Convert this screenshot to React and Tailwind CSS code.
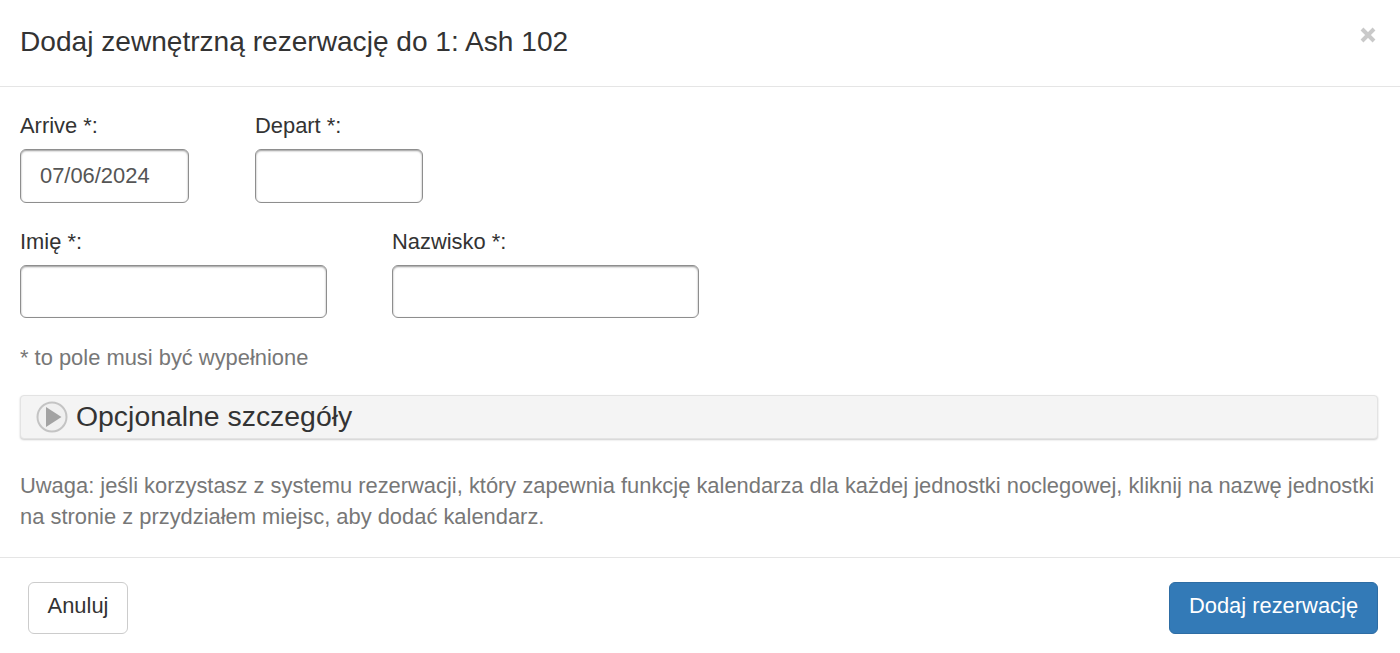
import React from 'react';

const fieldClass =
  'block rounded-[6px] border border-[#8e8e8e] bg-white px-[19px] text-[21.9px] text-[#555] shadow-[inset_0_1px_2px_rgba(0,0,0,0.4)] outline-none';

const Field = ({ label, width, height, value }) => (
  <div className={width}>
    <label className="block h-[24px] text-[21.9px] leading-[26px] mb-[12px] text-[#333]">{label}</label>
    <input type="text" defaultValue={value} className={`${fieldClass} ${height} w-full`} />
  </div>
);

const App = () => {
  return (
    <div className="w-[1400px] h-[653px] overflow-hidden bg-white text-[#333] font-['Liberation_Sans',Arial,sans-serif]">
      {/* Header */}
      <div className="h-[87px] border-b border-[#e5e5e5] flex items-start justify-between pl-[20px] pr-[24px]">
        <h4 className="mt-[24px] text-[28.1px] leading-[36px] font-normal">Dodaj zewnętrzną rezerwację do 1: Ash 102</h4>
        <button className="mt-[27px] text-[#c9c9c9]">
          <svg width="16" height="16" viewBox="0 0 16 16" className="block">
            <path d="M2 2 L14 14 M14 2 L2 14" stroke="currentColor" strokeWidth="4" />
          </svg>
        </button>
      </div>

      {/* Body */}
      <div className="h-[471px] border-b border-[#e5e5e5] pl-[20px] pr-[22px] pt-[26px]">
        <div className="flex gap-[66px]">
          <Field label="Arrive *:" width="w-[169px]" height="h-[54px]" value="07/06/2024" />
          <Field label="Depart *:" width="w-[168px]" height="h-[54px]" />
        </div>
        <div className="flex gap-[65px] mt-[26px]">
          <Field label="Imię *:" width="w-[307px]" height="h-[53px]" />
          <Field label="Nazwisko *:" width="w-[307px]" height="h-[53px]" />
        </div>
        <p className="mt-[28px] text-[21.9px] leading-[24px] text-[#777]">* to pole musi być wypełnione</p>

        <div className="mt-[25px] h-[44px] rounded-[4px] border border-[#e3e3e3] bg-[#f4f4f4] shadow-[0_1px_2px_rgba(0,0,0,0.2)] flex items-center pl-[15px]">
          <svg width="32" height="32" viewBox="0 0 32 32" className="mb-[1px]">
            <circle cx="16" cy="16" r="14.5" fill="#f0f0f0" stroke="#c4c4c4" strokeWidth="2" />
            <path d="M10 6 L25.5 16 L10 26 Z" fill="#a3a3a3" />
          </svg>
          <span className="ml-[8px] mb-[2px] text-[28.4px] leading-[36px]">Opcjonalne szczegóły</span>
        </div>

        <p className="mt-[31px] text-[21.9px] leading-[31px] text-[#777]">
          Uwaga: jeśli korzystasz z systemu rezerwacji, który zapewnia funkcję kalendarza dla każdej jednostki noclegowej, kliknij na nazwę jednostki na stronie z przydziałem miejsc, aby dodać kalendarz.
        </p>
      </div>

      {/* Footer */}
      <div className="flex items-start justify-between pl-[28px] pr-[22px] pt-[24px]">
        <button className="h-[52px] w-[100px] rounded-[6px] border border-[#ccc] bg-white pb-[3px] text-[21.9px] text-[#333]">Anuluj</button>
        <button className="h-[52px] w-[209px] rounded-[6px] border border-[#2e6da4] bg-[#337ab7] pb-[3px] text-[21.9px] text-white">Dodaj rezerwację</button>
      </div>
    </div>
  );
};

export default App;
